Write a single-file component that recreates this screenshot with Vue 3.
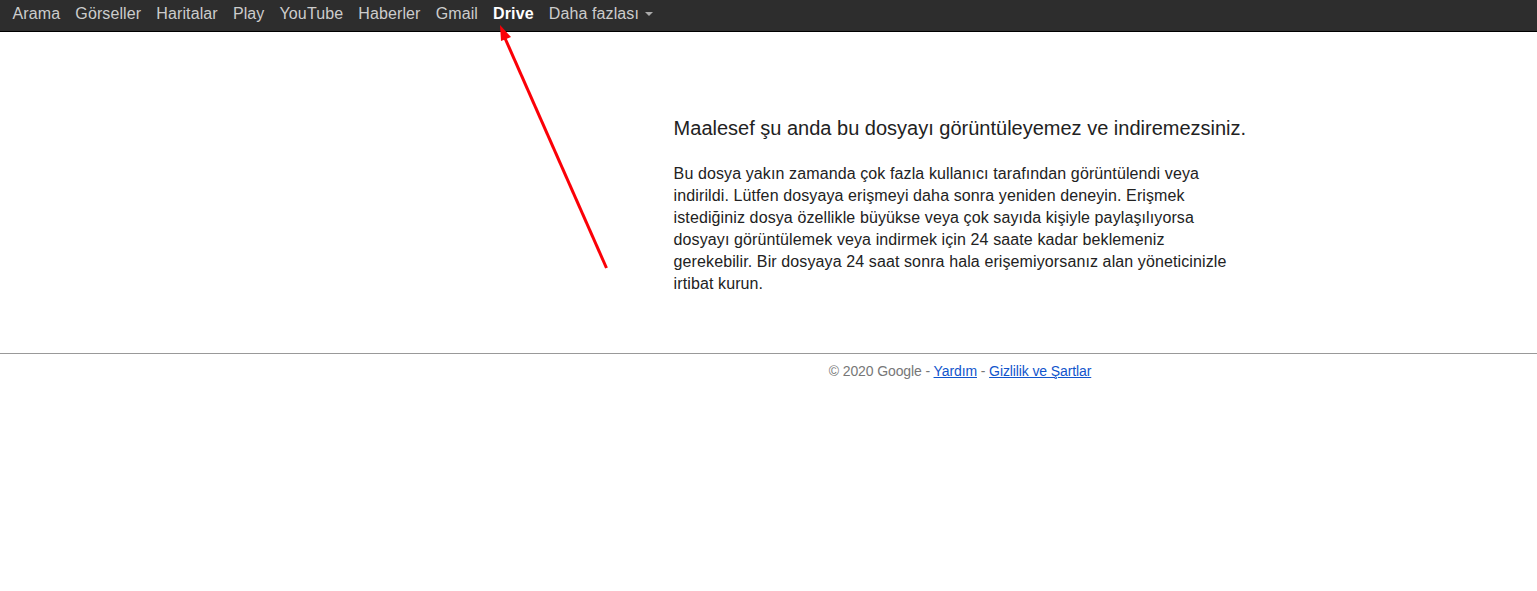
<script setup>
const links = ['Arama', 'Görseller', 'Haritalar', 'Play', 'YouTube', 'Haberler', 'Gmail']
</script>

<template>
  <div class="page">
    <nav class="bar">
      <a v-for="l in links" :key="l" class="item">{{ l }}</a>
      <a class="item active">Drive</a>
      <a class="item">Daha fazlası<span class="caret"></span></a>
    </nav>
    <main class="content">
      <h1 class="title">Maalesef şu anda bu dosyayı görüntüleyemez ve indiremezsiniz.</h1>
      <p class="body">Bu dosya yakın zamanda çok fazla kullanıcı tarafından görüntülendi veya indirildi. Lütfen dosyaya erişmeyi daha sonra yeniden deneyin. Erişmek istediğiniz dosya özellikle büyükse veya çok sayıda kişiyle paylaşılıyorsa dosyayı görüntülemek veya indirmek için 24 saate kadar beklemeniz gerekebilir. Bir dosyaya 24 saat sonra hala erişemiyorsanız alan yöneticinizle irtibat kurun.</p>
    </main>
    <footer class="foot">
      © 2020 Google - <a class="link">Yardım</a> - <a class="link">Gizlilik ve Şartlar</a>
    </footer>
    <svg class="arrow" width="120" height="250" viewBox="0 0 120 250">
      <line x1="106.5" y1="238" x2="4" y2="6" stroke="#fb0007" stroke-width="3" />
      <polygon points="0,-5 11,7 1,11" fill="#fb0007" />
    </svg>
  </div>
</template>

<style scoped>
.page {
  position: relative;
  height: 591px;
  overflow: hidden;
  background: #fff;
  font-family: "Liberation Sans", Arial, sans-serif;
}
.bar {
  display: flex;
  align-items: flex-start;
  height: 31px;
  padding-left: 5px;
  background: #2d2d2d;
  border-bottom: 1px solid #000;
}
.item {
  padding: 0 7.56px;
  font-size: 16px;
  letter-spacing: 0.11px;
  line-height: 27px;
  color: #ccc;
  white-space: nowrap;
}
.active {
  color: #fff;
  font-weight: 700;
}
.caret {
  display: inline-block;
  margin-left: 5.5px;
  vertical-align: 3px;
  border-top: 4px solid #aaa;
  border-left: 4px solid transparent;
  border-right: 4px solid transparent;
}
.content {
  box-sizing: border-box;
  height: 321px;
  margin-left: 673.6px;
  padding-top: 84px;
}
.title {
  margin: 0;
  font-size: 20px;
  font-weight: 400;
  line-height: 24px;
  color: #222;
  white-space: nowrap;
}
.body {
  width: 560px;
  margin: 23px 0 0;
  font-size: 16px;
  letter-spacing: 0.11px;
  line-height: 22px;
  color: #222;
}
.foot {
  padding: 9px 0 0 383px;
  border-top: 1px solid #999;
  font-size: 14px;
  letter-spacing: -0.11px;
  line-height: 17px;
  color: #777;
  text-align: center;
}
.link {
  color: #15c;
  text-decoration: underline;
}
.arrow {
  position: absolute;
  left: 500px;
  top: 30px;
  overflow: visible;
}
</style>
